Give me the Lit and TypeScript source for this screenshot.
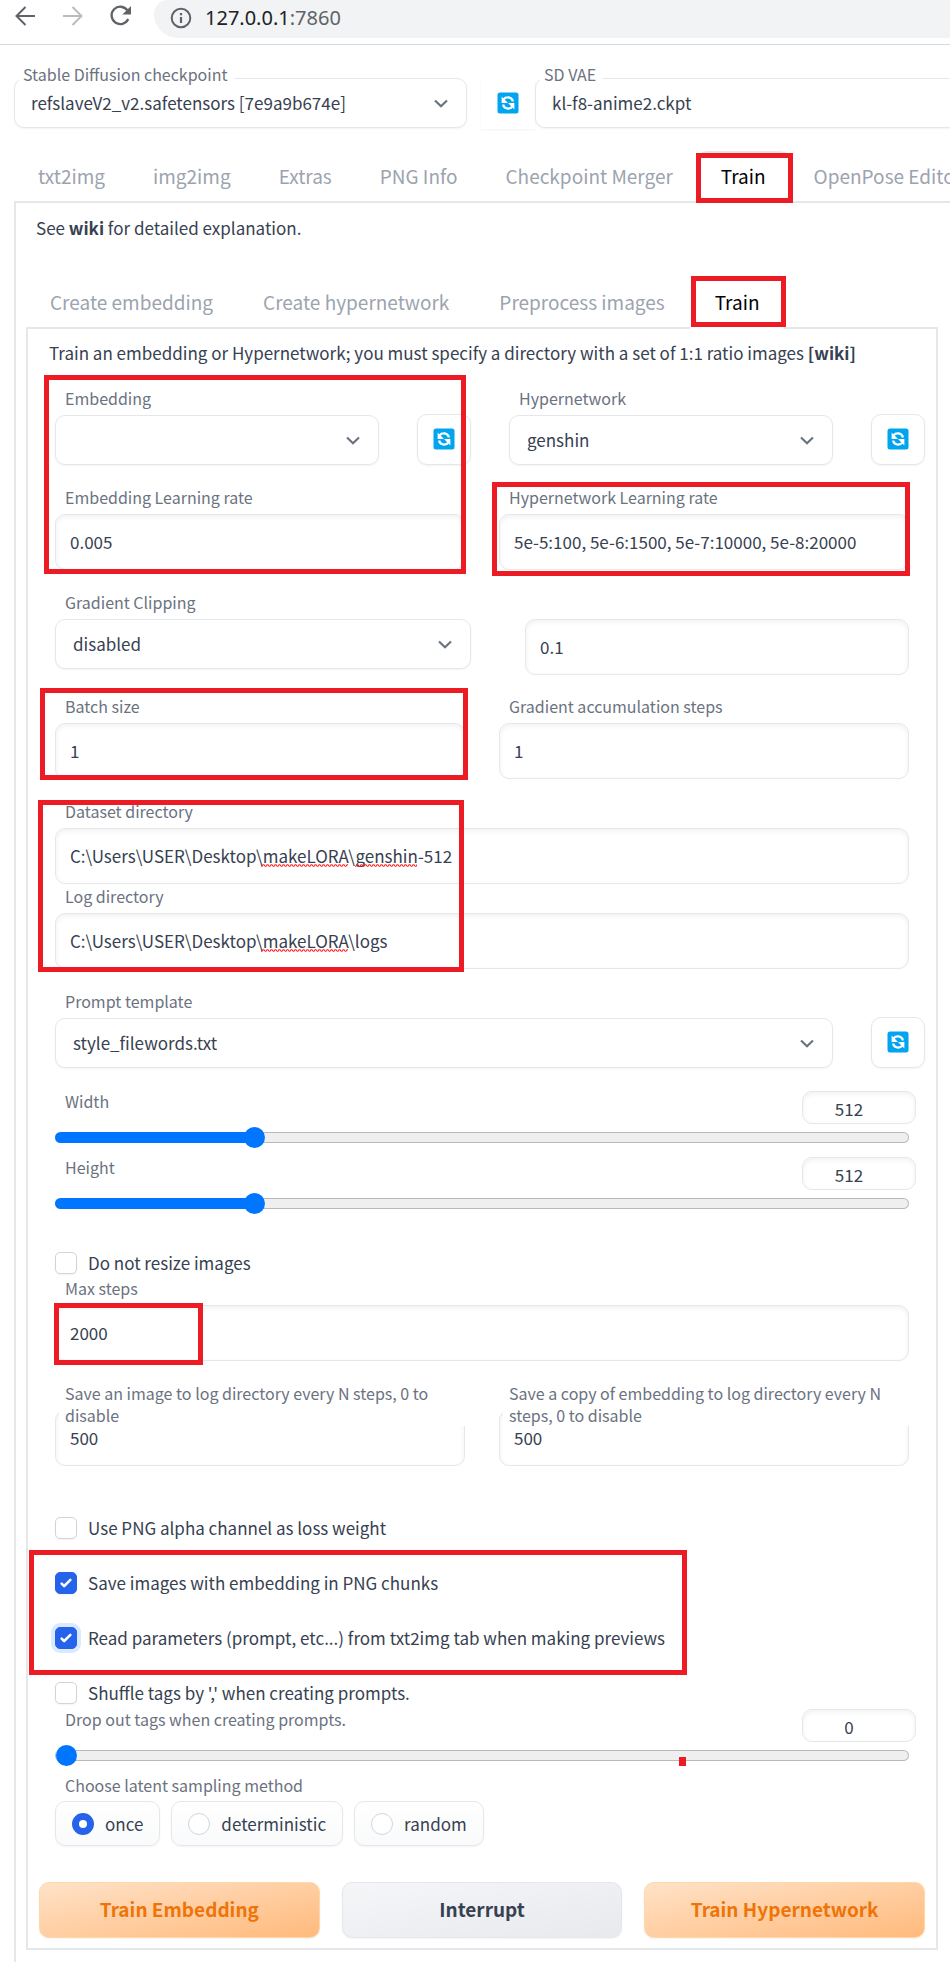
import { LitElement, html, css } from "lit";
import { customElement, state } from "lit/decorators.js";
import { styleMap } from "lit/directives/style-map.js";
import { classMap } from "lit/directives/class-map.js";

interface Mark {
  x: number;
  y: number;
  w: number;
  h: number;
  solid?: boolean;
}

interface Squiggle {
  x: number;
  w: number;
}

const TABS = ["txt2img", "img2img", "Extras", "PNG Info", "Checkpoint Merger", "Train", "OpenPose Editor"];
const SUB_TABS = ["Create embedding", "Create hypernetwork", "Preprocess images", "Train"];
const SAMPLING = ["once", "deterministic", "random"];

// Red annotation frames drawn over the page.
const MARKS: Mark[] = [
  { x: 696, y: 153, w: 97, h: 50 },
  { x: 691, y: 276, w: 95, h: 51 },
  { x: 44, y: 375, w: 422, h: 199 },
  { x: 492, y: 482, w: 418, h: 94 },
  { x: 40, y: 688, w: 428, h: 92 },
  { x: 38, y: 800, w: 426, h: 172 },
  { x: 54, y: 1303, w: 149, h: 62 },
  { x: 29, y: 1550, w: 658, h: 125 },
  { x: 679, y: 1757, w: 7, h: 9, solid: true },
];

const chevron = html`<svg class="chevron" viewBox="0 0 14 9" aria-hidden="true">
  <path d="M1 1.5 L7 7.2 L13 1.5" fill="none" stroke="#6b7280" stroke-width="2.2" />
</svg>`;

const refreshIcon = html`<svg class="refresh-icon" viewBox="0 0 22 22" aria-hidden="true">
  <rect x="0.5" y="0.5" width="21" height="21" rx="2.5" fill="#00a4ef" />
  <path d="M6.6 7.4 C8.6 4.8 13.6 4.6 15.6 8.2 L15.6 9.6" fill="none" stroke="#fff" stroke-width="2.3" />
  <path d="M4.6 4.6 V11 H11 Z" fill="#fff" />
  <path d="M15.4 14.6 C13.4 17.2 8.4 17.4 6.4 13.8 L6.4 12.6" fill="none" stroke="#fff" stroke-width="2.3" />
  <path d="M17.4 17.4 V11 H11 Z" fill="#fff" />
</svg>`;

@customElement("app-root")
export class AppRoot extends LitElement {
  @state() private tab = "Train";
  @state() private subTab = "Train";
  @state() private sampling = "once";

  static styles = css`
    :host {
      display: block;
      position: relative;
      overflow: hidden;
      background: #fff;
      color: #374151;
      font-family: "Noto Sans CJK SC", "Source Sans Pro", sans-serif;
      font-size: 17px;
      line-height: 24px;
    }
    *,
    *::before {
      box-sizing: border-box;
    }
    button,
    input,
    select {
      margin: 0;
      font: inherit;
      color: inherit;
    }

    .toolbar {
      display: flex;
      height: 45px;
      padding: 0 0 6px 14px;
      border-bottom: 1px solid #d9dbde;
    }
    .nav {
      display: flex;
      gap: 26px;
      padding: 5px 22px 0 0;
    }
    .nav button {
      display: block;
      width: 22px;
      height: 22px;
      padding: 0;
      border: 0;
      background: none;
    }
    .nav svg {
      display: block;
      width: 22px;
      height: 22px;
    }
    .address {
      display: flex;
      flex: 1;
      align-items: center;
      gap: 13px;
      padding: 0 0 3px 16px;
      background: #f1f3f4;
      border-radius: 14px 0 0 24px;
    }
    .address svg {
      width: 22px;
      height: 22px;
    }
    .address .url {
      font-family: "Noto Sans", sans-serif;
      font-size: 20px;
      color: #202124;
    }
    .address .port {
      color: #5f6368;
    }

    .quick {
      display: flex;
      width: calc(100% + 40px);
      padding: 33px 0 0 14px;
    }
    .quick .grow {
      flex: 0 0 453px;
    }
    .quick .rest {
      flex: 1;
    }
    .quick .select {
      position: relative;
    }
    .quick .select label {
      position: absolute;
      z-index: 1;
      left: 5px;
      top: -15px;
      padding: 0 6px 0 4px;
      background: #fff;
    }
    .quick select {
      padding: 0 16px;
    }
    .quick .refresh {
      width: 54px;
      margin-left: 14px;
      border-color: transparent;
      border-radius: 0;
    }

    label,
    .label {
      font-size: 16px;
      line-height: 22px;
      color: #6b7280;
    }
    a {
      color: inherit;
      font-weight: 600;
      text-decoration: none;
    }

    .tabs {
      display: flex;
      position: relative;
      white-space: nowrap;
      margin: 0 0 -2px -1px;
    }
    .tabs button {
      flex: none;
      height: 52px;
      padding: 0 23px 4px;
      border: 2px solid transparent;
      border-bottom: 0;
      border-radius: 10px 10px 0 0;
      background: none;
      font-size: 19px;
      color: #9ca3af;
    }
    .tabs button.selected {
      border-top-color: #e5e7eb;
      background: #fff;
      color: #000;
    }
    .tabs.main-tabs {
      margin: 22px 0 -2px 14px;
    }
    .tabs.main-tabs button {
      padding: 0 22px 4px;
    }
    .main-panel {
      width: calc(100% + 40px);
      margin-left: 14px;
      padding: 13px 64px 200px 10px;
      margin-bottom: -189px;
      border: 2px solid #e5e7eb;
    }
    .main-panel > p {
      margin: 0 0 37px 10px;
    }
    .sub-panel {
      padding: 12px 11px 10px;
      border: 2px solid #e5e7eb;
    }
    .sub-panel > p {
      margin: 0 0 22px 10px;
    }

    .form {
      display: flex;
      flex-direction: column;
      gap: 21px;
    }
    .inset {
      padding: 0 16px;
    }
    .cols {
      display: grid;
      grid-template-columns: 1fr 1fr;
      gap: 22px;
    }
    .cols.wide {
      gap: 34px;
    }
    .cols .from-left {
      padding-left: 16px;
    }
    .cols .both {
      padding: 28px 16px 0 32px;
      margin-bottom: -1px;
    }
    .tight {
      display: flex;
      flex-direction: column;
      gap: 1px;
    }

    .field {
      display: block;
      min-width: 0;
      flex: 1;
    }
    .field > label {
      display: block;
      position: relative;
      z-index: 1;
      height: 22px;
      margin: 0 0 6px 4px;
    }
    .field > label span {
      display: block;
      padding-left: 6px;
      background: #fff;
    }
    .text {
      display: block;
      width: 100%;
      height: 56px;
      padding: 0 14px 2px;
      border: 1px solid #e5e7eb;
      border-radius: 10px;
      background: #fff;
      box-shadow: inset 0 2px 5px rgba(0, 0, 0, 0.06);
      outline: none;
    }
    .box {
      position: relative;
    }
    .squiggle {
      position: absolute;
      top: 36px;
      height: 3px;
      background: url("data:image/svg+xml,%3Csvg xmlns='http://www.w3.org/2000/svg' width='4' height='3'%3E%3Cpath d='M0 2.2 L1 2.2 L2 0.8 L3 0.8 L4 2.2' fill='none' stroke='%23ff1a1a' stroke-width='1.1'/%3E%3C/svg%3E")
        repeat-x;
      pointer-events: none;
    }
    .select-box {
      position: relative;
    }
    select {
      display: block;
      width: 100%;
      height: 50px;
      padding: 0 17px;
      border: 1px solid #e5e7eb;
      border-radius: 10px;
      background: #fff;
      box-shadow: 0 1px 2px rgba(0, 0, 0, 0.05);
      appearance: none;
      outline: none;
    }
    .chevron {
      position: absolute;
      right: 19px;
      top: 21px;
      width: 14px;
      height: 9px;
      pointer-events: none;
    }
    .pick {
      display: flex;
      align-items: flex-end;
      gap: 38px;
      padding-left: 16px;
    }
    .refresh {
      display: flex;
      flex: none;
      align-items: center;
      justify-content: center;
      width: 54px;
      height: 51px;
      padding: 0 0 2px;
      border: 1px solid #e5e7eb;
      border-radius: 10px;
      background: #fff;
      box-shadow: 0 1px 2px rgba(0, 0, 0, 0.05);
    }
    .refresh-icon {
      display: block;
      width: 22px;
      height: 22px;
    }

    .sliders {
      display: flex;
      flex-direction: column;
      gap: 12px;
      margin-top: 1px;
    }
    .tight > .sliders {
      margin-top: 2px;
    }
    .slider-head {
      display: flex;
      justify-content: space-between;
      align-items: flex-start;
      height: 37px;
      margin-right: -7px;
      padding-left: 10px;
    }
    .number {
      width: 114px;
      height: 33px;
      margin-top: 1px;
      padding: 1px 30px 0 10px;
      border: 1px solid #e5e7eb;
      border-radius: 10px;
      background: #fff;
      box-shadow: inset 0 2px 5px rgba(0, 0, 0, 0.06);
      text-align: center;
      outline: none;
    }
    .range {
      display: block;
      width: 100%;
      height: 21px;
      margin-bottom: -4px;
      background: none;
      appearance: none;
      outline: none;
    }
    .range::-webkit-slider-runnable-track {
      height: 11px;
      border: 1px solid transparent;
      border-radius: 6px;
      background: linear-gradient(#0075ff, #0075ff) left / var(--fill) 100% no-repeat border-box,
        linear-gradient(#efefef, #efefef) padding-box, linear-gradient(#b9b9b9, #b9b9b9) border-box;
    }
    .range::-webkit-slider-thumb {
      width: 21px;
      height: 21px;
      margin-top: -6px;
      border-radius: 50%;
      background: #0075ff;
      appearance: none;
    }

    .check {
      display: flex;
      align-items: center;
      gap: 11px;
      font-size: 17px;
      line-height: 24px;
      color: #374151;
    }
    .tight > .check {
      margin-bottom: 1px;
    }
    .check input {
      flex: none;
      width: 22px;
      height: 22px;
      border: 1px solid #d1d5db;
      border-radius: 5px;
      background: #fff center / 100% no-repeat;
      box-shadow: 0 1px 2px rgba(0, 0, 0, 0.05);
      appearance: none;
      outline: none;
    }
    .check input:checked {
      border-color: #2563eb;
      background-color: #2563eb;
      background-image: url("data:image/svg+xml,%3Csvg viewBox='0 0 16 16' fill='white' xmlns='http://www.w3.org/2000/svg'%3E%3Cpath d='M12.207 4.793a1 1 0 010 1.414l-5 5a1 1 0 01-1.414 0l-2-2a1 1 0 011.414-1.414L6.5 9.086l4.293-4.293a1 1 0 011.414 0z'/%3E%3C/svg%3E");
    }
    .check input.focused {
      box-shadow: 0 0 0 4px #dbeafe;
    }
    .checks {
      display: flex;
      flex-direction: column;
      gap: 31px;
    }
    .after-sliders {
      margin-top: 20px;
    }
    .after-saves {
      margin-top: 29px;
    }

    .radios {
      display: flex;
      flex-wrap: wrap;
      gap: 11px;
    }
    fieldset {
      margin: 0;
      padding: 0;
      border: 0;
    }
    legend {
      padding: 0 0 5px 10px;
    }
    .radio {
      display: flex;
      align-items: center;
      gap: 11px;
      height: 45px;
      padding: 0 16px;
      border: 1px solid #e5e7eb;
      border-radius: 10px;
      background: linear-gradient(#fff, #f9fafb);
      box-shadow: 0 1px 2px rgba(0, 0, 0, 0.05);
      font-size: 17px;
      color: #374151;
    }
    .radio input {
      width: 22px;
      height: 22px;
      border: 1px solid #d1d5db;
      border-radius: 50%;
      background: #fff;
      appearance: none;
      outline: none;
    }
    .radio input:checked {
      border: 7px solid #2563eb;
    }

    .actions {
      display: grid;
      grid-template-columns: repeat(3, 1fr);
      gap: 22px;
      margin-top: 15px;
    }
    .actions button {
      height: 56px;
      padding: 0 0 2px;
      border: 1px solid #e5e7eb;
      border-radius: 10px;
      background: linear-gradient(to bottom right, #f5f6f8, #e7e9ed);
      box-shadow: 0 1px 2px rgba(0, 0, 0, 0.05);
      font-size: 19px;
      font-weight: 600;
      color: #374151;
    }
    .actions .primary {
      border-color: #fed7aa;
      background: linear-gradient(to bottom right, #ffe2c8, #ffba7c);
      color: #ee7408;
    }

    .mark {
      position: absolute;
      z-index: 5;
      border: 5px solid #ed1c24;
      pointer-events: none;
    }
    .mark.solid {
      border: 0;
      background: #ed1c24;
    }
  `;

  private tabs(names: string[], active: string, pick: (n: string) => void, extra: string) {
    return html`<nav class="tabs ${extra}" role="tablist">
      ${names.map(
        (n) => html`<button
          type="button"
          role="tab"
          aria-selected=${n === active}
          class=${classMap({ selected: n === active })}
          @click=${() => pick(n)}
        >${n}</button>`,
      )}
    </nav>`;
  }

  private select(id: string, label: string, value: string) {
    return html`<div class="field">
      <label for=${id}><span>${label}</span></label>
      <div class="select-box">
        <select id=${id}><option>${value}</option></select>
        ${chevron}
      </div>
    </div>`;
  }

  private text(id: string, label: string, value: string, squiggles: Squiggle[] = []) {
    return html`<div class="field">
      <label for=${id}><span>${label}</span></label>
      <div class="box">
        <input class="text" id=${id} .value=${value} spellcheck="false" />
        ${squiggles.map(
          (s) => html`<i class="squiggle" style=${styleMap({ left: `${s.x}px`, width: `${s.w}px` })}></i>`,
        )}
      </div>
    </div>`;
  }

  private refresh(label: string) {
    return html`<button class="refresh" type="button" aria-label=${label}>${refreshIcon}</button>`;
  }

  private slider(id: string, label: string, value: number, min: number, max: number, step: number) {
    const ratio = (value - min) / (max - min);
    return html`<div>
      <div class="slider-head">
        <label for=${id}>${label}</label>
        <input class="number" aria-label="${label} value" .value=${String(value)} inputmode="numeric" />
      </div>
      <input
        class="range"
        id=${id}
        type="range"
        min=${min}
        max=${max}
        step=${step}
        .value=${String(value)}
        style=${styleMap({ "--fill": `${ratio * 100}%` })}
      />
    </div>`;
  }

  private check(label: string, checked = false, focused = false) {
    return html`<label class="check">
      <input type="checkbox" class=${classMap({ focused })} .checked=${checked} />${label}
    </label>`;
  }

  render() {
    return html`
      <header class="toolbar">
        <div class="nav">
          <button type="button" aria-label="Back">
            <svg viewBox="0 0 22 22" fill="none" stroke="#5f6368" stroke-width="2">
              <path d="M21 11 H3 M11.5 2 L2.5 11 L11.5 20" />
            </svg>
          </button>
          <button type="button" aria-label="Forward">
            <svg viewBox="0 0 22 22" fill="none" stroke="#babcbe" stroke-width="2">
              <path d="M1 11 H19 M10.5 2 L19.5 11 L10.5 20" />
            </svg>
          </button>
          <button type="button" aria-label="Reload">
            <svg viewBox="0 0 22 22">
              <path d="M18.2 14 A8.7 8.7 0 1 1 17.4 5.4" fill="none" stroke="#5f6368" stroke-width="2.3" />
              <path d="M21 1 V9.6 H12.4 Z" fill="#5f6368" />
            </svg>
          </button>
        </div>
        <div class="address">
          <svg viewBox="0 0 22 22" fill="none" stroke="#5f6368" stroke-width="2">
            <circle cx="11" cy="11" r="9.3" />
            <path d="M11 10 V16 M11 6 V8.2" stroke-width="2.2" />
          </svg>
          <span class="url">127.0.0.1<span class="port">:7860</span></span>
        </div>
      </header>

      <section class="quick">
        <div class="select grow">
          <label for="ckpt">Stable Diffusion checkpoint</label>
          <select id="ckpt"><option>refslaveV2_v2.safetensors [7e9a9b674e]</option></select>
          ${chevron}
        </div>
        ${this.refresh("Refresh checkpoints")}
        <div class="select rest">
          <label for="vae">SD VAE</label>
          <select id="vae"><option>kl-f8-anime2.ckpt</option></select>
        </div>
      </section>

      ${this.tabs(TABS, this.tab, (n) => (this.tab = n), "main-tabs")}
      <main class="main-panel">
        <p>See <a href="#wiki">wiki</a> for detailed explanation.</p>
        ${this.tabs(SUB_TABS, this.subTab, (n) => (this.subTab = n), "sub-tabs")}
        <div class="sub-panel">
          <p>
            Train an embedding or Hypernetwork; you must specify a directory with a set of 1:1 ratio images
            <a href="#train-wiki">[wiki]</a>
          </p>
          <form class="form" @submit=${(e: Event) => e.preventDefault()}>
            <div class="cols">
              <div class="pick">${this.select("emb", "Embedding", "")} ${this.refresh("Refresh embeddings")}</div>
              <div class="pick">
                ${this.select("hyp", "Hypernetwork", "genshin")} ${this.refresh("Refresh hypernetworks")}
              </div>
            </div>
            <div class="inset cols wide">
              ${this.text("emb-rate", "Embedding Learning rate", "0.005")}
              ${this.text("hyp-rate", "Hypernetwork Learning rate", "5e-5:100, 5e-6:1500, 5e-7:10000, 5e-8:20000")}
            </div>
            <div class="cols">
              <div class="from-left">${this.select("clip", "Gradient Clipping", "disabled")}</div>
              <div class="both"><input class="text" aria-label="Gradient clip value" .value=${"0.1"} /></div>
            </div>
            <div class="inset cols wide">
              ${this.text("batch", "Batch size", "1")} ${this.text("accum", "Gradient accumulation steps", "1")}
            </div>
            <div class="inset tight">
              ${this.text("dataset", "Dataset directory", "C:\\Users\\USER\\Desktop\\makeLORA\\genshin-512", [
                { x: 206, w: 87 },
                { x: 300, w: 62 },
              ])}
              ${this.text("log", "Log directory", "C:\\Users\\USER\\Desktop\\makeLORA\\logs", [{ x: 206, w: 87 }])}
            </div>
            <div class="pick">
              ${this.select("template", "Prompt template", "style_filewords.txt")} ${this.refresh("Refresh templates")}
            </div>
            <div class="inset sliders">
              ${this.slider("width", "Width", 512, 64, 2048, 8)} ${this.slider("height", "Height", 512, 64, 2048, 8)}
            </div>
            <div class="inset tight after-sliders">
              ${this.check("Do not resize images")} ${this.text("steps", "Max steps", "2000")}
            </div>
            <div class="inset cols wide">
              ${this.text("save-image", "Save an image to log directory every N steps, 0 to disable", "500")}
              ${this.text("save-copy", "Save a copy of embedding to log directory every N steps, 0 to disable", "500")}
            </div>
            <div class="inset tight after-saves">
              <div class="checks">
                ${this.check("Use PNG alpha channel as loss weight")}
                ${this.check("Save images with embedding in PNG chunks", true)}
                ${this.check("Read parameters (prompt, etc...) from txt2img tab when making previews", true, true)}
                ${this.check("Shuffle tags by ',' when creating prompts.")}
              </div>
              <div class="sliders">
                ${this.slider("dropout", "Drop out tags when creating prompts.", 0, 0, 1, 0.1)}
                <fieldset>
                  <legend class="label">Choose latent sampling method</legend>
                  <div class="radios">
                    ${SAMPLING.map(
                      (s) => html`<label class="radio">
                        <input
                          type="radio"
                          name="sampling"
                          .checked=${s === this.sampling}
                          @change=${() => (this.sampling = s)}
                        />${s}
                      </label>`,
                    )}
                  </div>
                </fieldset>
              </div>
            </div>
            <div class="actions">
              <button class="primary" type="button">Train Embedding</button>
              <button type="button">Interrupt</button>
              <button class="primary" type="button">Train Hypernetwork</button>
            </div>
          </form>
        </div>
      </main>

      ${MARKS.map(
        (m) => html`<div
          class=${classMap({ mark: true, solid: !!m.solid })}
          style=${styleMap({ left: `${m.x}px`, top: `${m.y}px`, width: `${m.w}px`, height: `${m.h}px` })}
        ></div>`,
      )}
    `;
  }
}
